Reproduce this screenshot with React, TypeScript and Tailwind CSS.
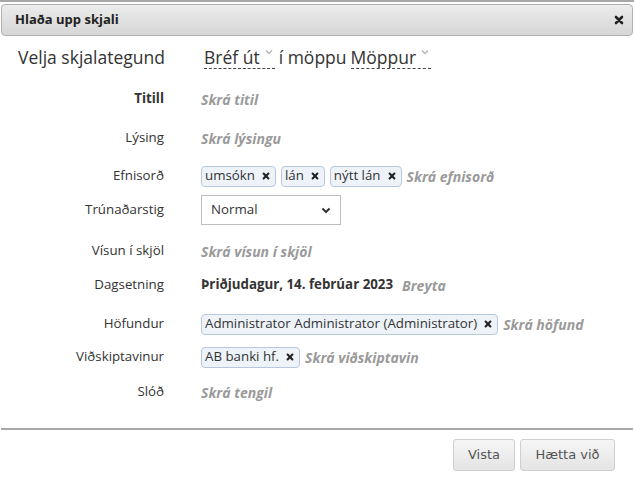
import React from "react";

const font = { fontFamily: '"Open Sans", "Liberation Sans", sans-serif' };

function Chevron() {
  return (
    <svg width="8" height="6" viewBox="0 0 8 6" className="ml-[5px] mb-[9px]">
      <path d="M1 1.5 L4 4.5 L7 1.5" fill="none" stroke="#b5b5b5" strokeWidth="1.3" />
    </svg>
  );
}

function X({ size = 8 }: { size?: number }) {
  return (
    <svg width={size} height={size} viewBox="0 0 10 10">
      <path d="M2 2 L8 8 M8 2 L2 8" stroke="#222" strokeWidth="2.6" strokeLinecap="round" />
    </svg>
  );
}

function Tag({ label }: { label: string }) {
  return (
    <span className="inline-flex h-[21px] items-center gap-[7px] rounded-[4px] border border-[#b8c8dc] bg-[#eef3fa] pl-[3px] pr-[5px] text-[13.3px] text-[#333]">
      {label}
      <X />
    </span>
  );
}

function Placeholder({ children }: { children: React.ReactNode }) {
  return <span className="text-[14px] font-bold italic text-[#9a9a9a]">{children}</span>;
}

function Row({ label, bold, mt, children }: { label: string; bold?: boolean; mt: string; children: React.ReactNode }) {
  return (
    <div className={`flex h-[30px] items-center ${mt}`}>
      <div className={`w-[165px] pr-[1px] text-right text-[13.3px] text-[#333] ${bold ? "font-bold" : ""}`}>{label}</div>
      <div className="ml-[36px] flex items-center gap-[5px]">{children}</div>
    </div>
  );
}

export default function App() {
  return (
    <div className="h-[483px] w-[634px] overflow-hidden border-t-2 border-[#a8a8a8] bg-white" style={font}>
      <div className="mx-[1px] mt-[2px] flex h-[32px] items-center justify-between rounded-[4px] border border-[#b0b0b0] bg-gradient-to-b from-[#ececec] to-[#d6d6d6] pl-[13px] pr-[8px]">
        <span className="text-[13px] font-bold text-[#222]">Hlaða upp skjali</span>
        <X size={10} />
      </div>

      <div className="mt-[6px] flex h-[30px] items-center text-[17.5px] text-[#333]">
        <span className="ml-[18px] w-[186px]">Velja skjalategund</span>
        <span className="flex items-center border-b border-dashed border-[#444] pr-[2px] leading-[22px]">
          Bréf út
          <Chevron />
        </span>
        <span className="mx-[4px]">í möppu</span>
        <span className="flex items-center border-b border-dashed border-[#444] pr-[2px] leading-[22px]">
          Möppur
          <Chevron />
        </span>
      </div>

      <Row label="Titill" bold mt="mt-[12px]">
        <Placeholder>Skrá titil</Placeholder>
      </Row>
      <Row label="Lýsing" mt="mt-[9px]">
        <Placeholder>Skrá lýsingu</Placeholder>
      </Row>
      <Row label="Efnisorð" mt="mt-[8px]">
        <Tag label="umsókn" />
        <Tag label="lán" />
        <Tag label="nýtt lán" />
        <Placeholder>Skrá efnisorð</Placeholder>
      </Row>
      <Row label="Trúnaðarstig" mt="mt-[4px]">
        <div className="flex h-[30px] w-[140px] items-center justify-between border border-[#bdbdbd] bg-white pl-[9px] pr-[9px] text-[13.3px] text-[#333]">
          Normal
          <svg width="10" height="7" viewBox="0 0 10 7">
            <path d="M1.5 1.5 L5 5 L8.5 1.5" fill="none" stroke="#333" strokeWidth="2" />
          </svg>
        </div>
      </Row>
      <Row label="Vísun í skjöl" mt="mt-[11px]">
        <Placeholder>Skrá vísun í skjöl</Placeholder>
      </Row>
      <Row label="Dagsetning" mt="mt-[4px]">
        <span className="text-[13.3px] font-bold text-[#333]">Þriðjudagur, 14. febrúar 2023</span>
        <span className="ml-[4px]">
          <Placeholder>Breyta</Placeholder>
        </span>
      </Row>
      <Row label="Höfundur" mt="mt-[9px]">
        <Tag label="Administrator Administrator (Administrator)" />
        <Placeholder>Skrá höfund</Placeholder>
      </Row>
      <Row label="Viðskiptavinur" mt="mt-[3px]">
        <Tag label="AB banki hf." />
        <Placeholder>Skrá viðskiptavin</Placeholder>
      </Row>
      <Row label="Slóð" mt="mt-[5px]">
        <Placeholder>Skrá tengil</Placeholder>
      </Row>

      <div className="mx-[1px] mt-[21px] h-[2px] bg-[#a8a8a8]" />

      <div className="mr-[19px] mt-[9px] flex justify-end gap-[5px]" style={{ fontFamily: '"DejaVu Sans", Verdana, sans-serif' }}>
        <button className="h-[32px] w-[62px] rounded-[3px] border border-[#cfcfcf] bg-gradient-to-b from-[#f6f6f6] to-[#e4e4e4] text-[13px] text-[#555]">Vista</button>
        <button className="h-[32px] w-[95px] rounded-[3px] border border-[#cfcfcf] bg-gradient-to-b from-[#f6f6f6] to-[#e4e4e4] text-[13px] text-[#555]">Hætta við</button>
      </div>
    </div>
  );
}
